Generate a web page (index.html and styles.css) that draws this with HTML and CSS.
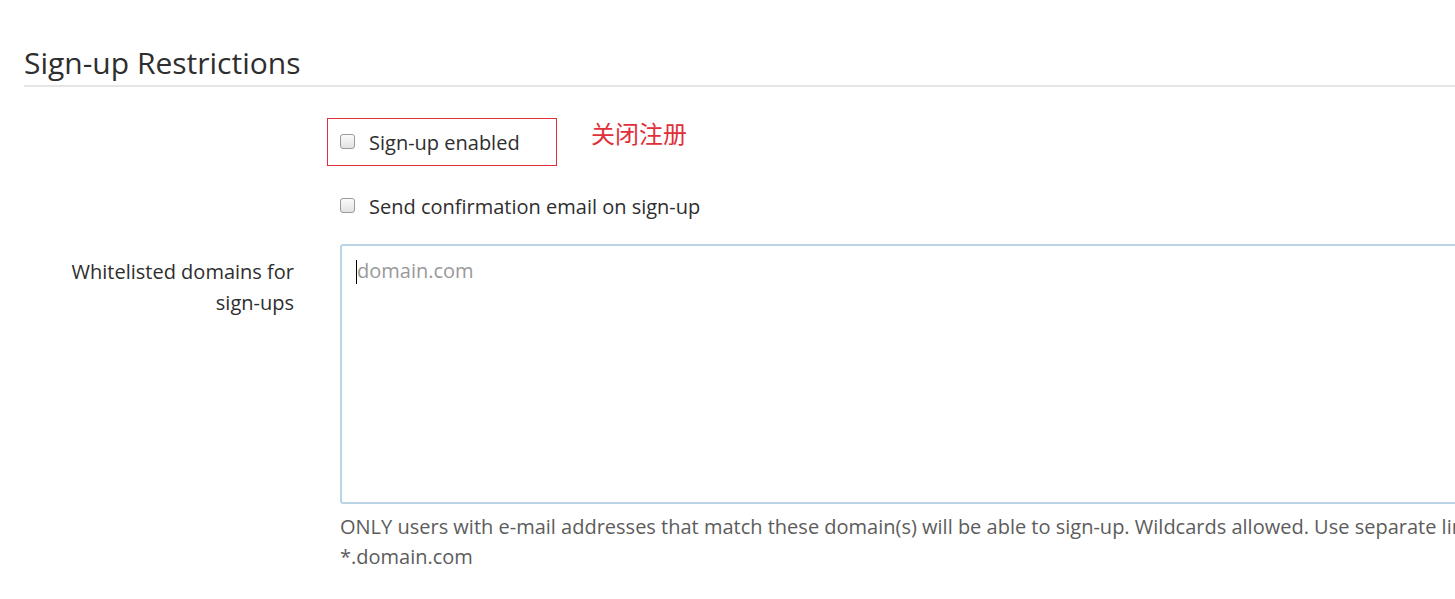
FILE: index.html
```html
<!DOCTYPE html>
<html>
<head>
<meta charset="utf-8">
<link rel="stylesheet" href="styles.css">
</head>
<body>
<div class="page">
  <h4 class="section-title">Sign-up Restrictions</h4>
  <div class="form">
    <div class="row">
      <div class="label-col"></div>
      <div class="field-col">
        <div class="check-row highlighted">
          <label class="check"><span class="box"></span><span class="check-text">Sign-up enabled</span></label>
        </div>
        <span class="note">关闭注册</span>
      </div>
    </div>
    <div class="row">
      <div class="label-col"></div>
      <div class="field-col">
        <div class="check-row">
          <label class="check"><span class="box"></span><span class="check-text">Send confirmation email on sign-up</span></label>
        </div>
      </div>
    </div>
    <div class="row row-textarea">
      <label class="label-col field-label">Whitelisted domains for <span class="nowrap">sign-ups</span></label>
      <div class="field-col column">
        <div class="textarea"><span class="caret"></span><span class="placeholder">domain.com</span></div>
        <p class="help">ONLY users with e-mail addresses that match these domain(s) will be able to sign-up. Wildcards allowed. Use separate lines for multiple entries. Ex: domain.com,<br>*.domain.com</p>
      </div>
    </div>
  </div>
</div>
</body>
</html>
```
FILE: styles.css
```css
html, body {
  margin: 0;
  padding: 0;
  background: #fff;
  overflow: hidden;
}
body {
  font-family: "Open Sans", "Noto Sans CJK SC", sans-serif;
  color: #2e2e2e;
}
.page {
  width: 1800px;
  padding: 40px 0 0 24px;
}
.section-title {
  margin: 0;
  font-weight: 400;
  font-size: 30px;
  line-height: 45px;
  color: #2e2e2e;
  border-bottom: 2px solid #e5e5e5;
}
.form {
  padding-top: 31px;
}
.row {
  display: flex;
}
.label-col {
  width: 270px;
  flex: none;
  margin-right: 33px;
  text-align: right;
}
.field-label {
  font-size: 20px;
  line-height: 31px;
  padding-top: 12px;
  color: #2e2e2e;
}
.nowrap {
  white-space: nowrap;
}
.field-col {
  display: flex;
  align-items: flex-start;
  flex: 1;
}
.field-col.column {
  flex-direction: column;
}
.check-row {
  width: 204px;
  height: 46px;
  padding: 0 12px;
  border: 1px solid transparent;
  display: flex;
  align-items: center;
}
.check-row.highlighted {
  border-color: #e0303a;
}
.check {
  display: flex;
  align-items: center;
  font-size: 20px;
  line-height: 30px;
  color: #2e2e2e;
  padding-top: 2px;
}
.box {
  width: 15px;
  height: 15px;
  box-sizing: border-box;
  border: 1px solid #9a9a9a;
  border-radius: 3px;
  background: linear-gradient(#fbfbfb, #e2e2e2);
  margin-right: 14px;
  margin-top: -3px;
  flex: none;
}
.check-text {
  white-space: nowrap;
}
.note {
  color: #e0303a;
  font-size: 24px;
  line-height: 30px;
  margin-left: 34px;
  margin-top: 1px;
}
.row:nth-child(2) {
  margin-top: 16px;
}
.row-textarea {
  margin-top: 14px;
}
.textarea {
  margin-left: 13px;
  width: 1400px;
  height: 260px;
  box-sizing: border-box;
  border: 2px solid #b9d5e6;
  border-radius: 3px;
  padding: 10px 14px;
  font-size: 20px;
  line-height: 30px;
  display: flex;
  align-items: flex-start;
}
.caret {
  width: 1px;
  height: 24px;
  background: #000;
  margin-top: 4px;
}
.placeholder {
  color: #999;
}
.help {
  margin: 8px 0 0 13px;
  font-size: 20px;
  line-height: 30px;
  color: #5c5c5c;
  white-space: nowrap;
}
```
